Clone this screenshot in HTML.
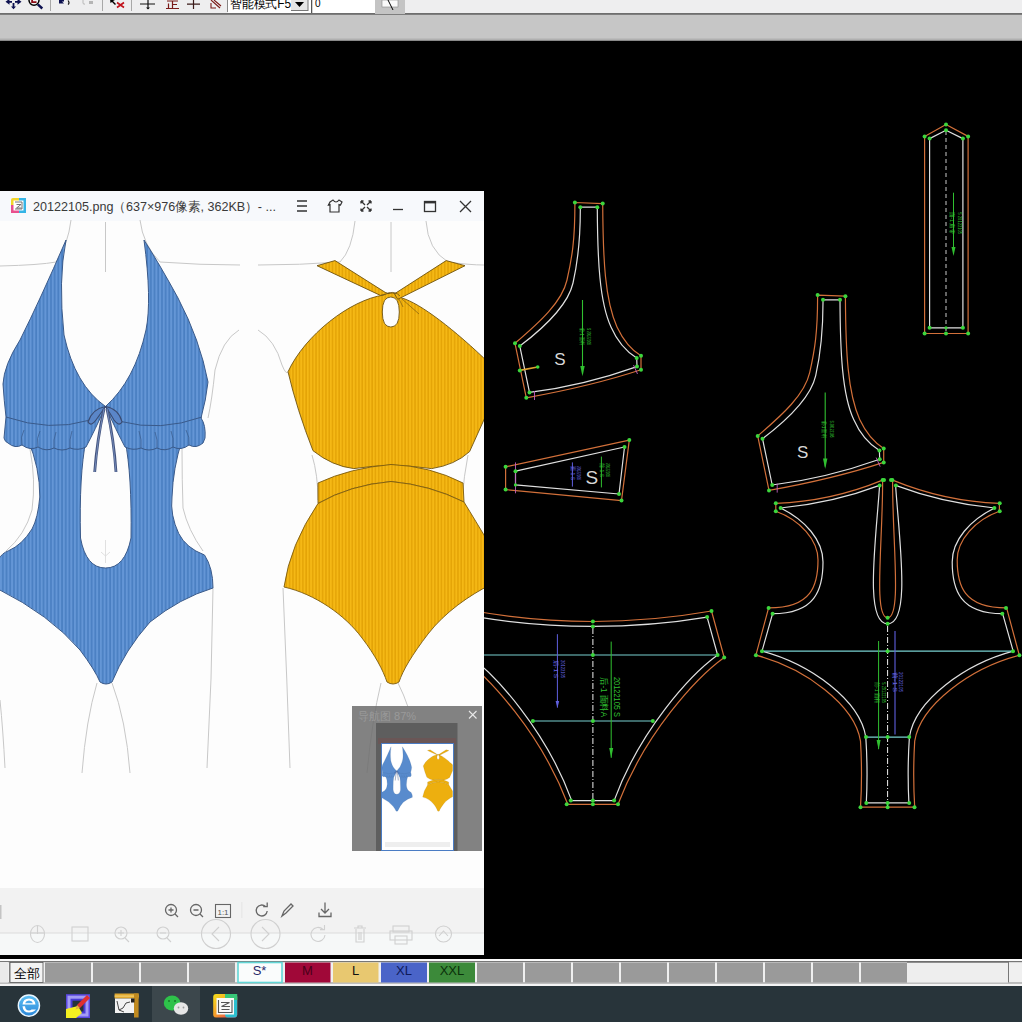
<!DOCTYPE html>
<html><head><meta charset="utf-8">
<style>
html,body{margin:0;padding:0;width:1022px;height:1022px;overflow:hidden;background:#000;font-family:"Liberation Sans",sans-serif;}
svg{position:absolute;left:0;top:0;display:block}
</style></head>
<body>
<svg width="1022" height="1022" viewBox="0 0 1022 1022" font-family="Liberation Sans, sans-serif">
<defs>
<pattern id="blueRib" patternUnits="userSpaceOnUse" width="3.7" height="10">
<rect width="3.7" height="10" fill="#6496d6"/><rect x="2" width="1.7" height="10" fill="#4a7fc2"/>
</pattern>
<pattern id="yelRib" patternUnits="userSpaceOnUse" width="3.3" height="10">
<rect width="3.3" height="10" fill="#f5b815"/><rect x="1.8" width="1.5" height="10" fill="#e4a406"/>
</pattern>
<linearGradient id="tbgrad" x1="0" y1="0" x2="0" y2="1">
<stop offset="0" stop-color="#f6f6f6"/><stop offset="1" stop-color="#ececec"/>
</linearGradient>
</defs>

<!-- ============ TOP TOOLBAR ============ -->
<g id="toolbar">
<rect x="0" y="0" width="1022" height="14" fill="#eeeeef"/>
<rect x="0" y="13" width="1022" height="1.5" fill="#6e6e6e"/>
<rect x="0" y="14.5" width="1022" height="26" fill="#c6c6c6"/>
<rect x="0" y="38.5" width="1022" height="2" fill="#b0b0b0"/>
<!-- move icon -->
<path d="M8.5 1.8H12M15 1.8H19M13.5 3V7.5" stroke="#0c1050" stroke-width="1.8" fill="none"/>
<path d="M5.5 1.8L9.5 -1.2V4.8Z M21.5 1.8L17.5 -1.2V4.8Z M11 6.5H16L13.5 9.3Z" fill="#0c1050"/>
<!-- magnifier -->
<circle cx="34" cy="0.3" r="5" fill="#f4f4f4" stroke="#000" stroke-width="1.5"/>
<path d="M31.2 -2H33V1.2H36.5V3H31.2Z" fill="#8a0a14"/>
<path d="M37.8 4.3L42.3 8.5" stroke="#0c1050" stroke-width="2.4"/>
<rect x="50" y="0" width="1" height="11" fill="#a8a8a8"/>
<!-- undo -->
<path d="M59 0H64V1.5H62L64 3.5H59Z" fill="#0c1050"/>
<path d="M68 0.5Q70 3 68 4.5" fill="none" stroke="#111" stroke-width="1.2"/>
<!-- redo gray -->
<path d="M83 0V3.5Q84 4.5 85 4" fill="none" stroke="#b8b8b8" stroke-width="1"/>
<path d="M89 1H93V4H89Z" fill="#b5b5b5"/>
<rect x="102" y="0" width="1" height="11" fill="#a8a8a8"/>
<!-- cursor + red x -->
<path d="M110 -1L110.5 3L112 2L115 5L116 4L113 1L115 0Z" fill="#000"/>
<path d="M117 2.5L124 7.5M117 7.5L124 2.5" stroke="#c0101a" stroke-width="1.6"/>
<rect x="131" y="0" width="1" height="11" fill="#a8a8a8"/>
<!-- move cross -->
<path d="M140 4H155M148 -1V9" stroke="#111" stroke-width="1.2" fill="none"/>
<path d="M146 7.5H150L148 9.5Z" fill="#111"/>
<!-- 正 -->
<path d="M167 1H178M172.5 1V8.5M172.5 4.5H177M168.5 3.5V8.5M166 8.5H179" stroke="#7a1a18" stroke-width="1.2" fill="none"/>
<!-- 十 -->
<path d="M187 4.2H200M193.5 0V9" stroke="#3a1a18" stroke-width="1.2" fill="none"/>
<!-- ruler -->
<path d="M211 0L220 8M214 0L221 6M211 3V8H216" stroke="#7a1a18" stroke-width="1.1" fill="none"/>
<rect x="227" y="0" width="1" height="12" fill="#888"/>
<!-- combobox -->
<rect x="228" y="0" width="83" height="13" fill="#fff"/>
<text x="230" y="7.8" font-size="13" fill="#000" textLength="61" lengthAdjust="spacingAndGlyphs">智能模式F5</text>
<rect x="291" y="0" width="17" height="10.5" fill="#e6e6e6"/>
<rect x="291" y="10" width="17" height="1" fill="#777"/>
<rect x="307.5" y="0" width="1" height="11" fill="#777"/>
<path d="M295 2H304L299.5 7Z" fill="#000"/>
<!-- input -->
<rect x="311" y="0" width="1.5" height="13" fill="#555"/>
<rect x="312.5" y="0" width="63" height="13" fill="#fff"/>
<text x="315" y="7" font-size="10" fill="#000">0</text>
<rect x="375" y="0" width="30" height="14" fill="#c4c4c4"/>
<rect x="382" y="0" width="16" height="7" fill="#fafafa" stroke="#888" stroke-width="0.6"/>
<path d="M388 0L393 10" stroke="#000" stroke-width="1"/>
</g>

<!-- ============ SIZE BAR ============ -->
<g id="sizebar">
<rect x="0" y="957" width="1022" height="29" fill="#f0f0f0"/>
<rect x="0" y="957" width="1022" height="2" fill="#000"/>
<rect x="0" y="959" width="1022" height="2" fill="#fafafa"/>
<rect x="0" y="961" width="1022" height="1.2" fill="#777"/>
<rect x="0" y="982.5" width="1022" height="1.2" fill="#888"/>
<rect x="0" y="983.7" width="1022" height="2.3" fill="#f4f4f4"/>
<rect x="0" y="962" width="8" height="20.5" fill="#eaeaea"/>
<rect x="9" y="962" width="1" height="20.5" fill="#999"/>
<rect x="10" y="962.5" width="33" height="20" fill="#f3f3f3" stroke="#555" stroke-width="0.8"/>
<text x="14" y="977.5" font-size="13" fill="#000">全部</text>
<g fill="#9a9a9a">
<rect x="45" y="962.5" width="46" height="20"/><rect x="93" y="962.5" width="46" height="20"/>
<rect x="141" y="962.5" width="46" height="20"/><rect x="189" y="962.5" width="46" height="20"/>
<rect x="477" y="962.5" width="46" height="20"/><rect x="525" y="962.5" width="46" height="20"/>
<rect x="573" y="962.5" width="46" height="20"/><rect x="621" y="962.5" width="46" height="20"/>
<rect x="669" y="962.5" width="46" height="20"/><rect x="717" y="962.5" width="46" height="20"/>
<rect x="765" y="962.5" width="46" height="20"/><rect x="813" y="962.5" width="46" height="20"/>
<rect x="861" y="962.5" width="46" height="20"/>
</g>
<rect x="238" y="962.5" width="44" height="20" fill="#fafcfc" stroke="#62d6d6" stroke-width="1.6"/>
<text x="259.5" y="974.5" font-size="13" fill="#2a2a6a" text-anchor="middle">S*</text>
<rect x="285" y="962.5" width="45.5" height="20" fill="#a00838"/>
<text x="307.5" y="974.5" font-size="13" fill="#4a0018" text-anchor="middle">M</text>
<rect x="333" y="962.5" width="45.5" height="20" fill="#e8c870"/>
<text x="355.5" y="974.5" font-size="13" fill="#111" text-anchor="middle">L</text>
<rect x="381" y="962.5" width="46" height="20" fill="#4a64c8"/>
<text x="404" y="974.5" font-size="13" fill="#0e1a5a" text-anchor="middle">XL</text>
<rect x="429" y="962.5" width="46" height="20" fill="#3c8a3a"/>
<text x="452" y="974.5" font-size="13" fill="#0a300a" text-anchor="middle">XXL</text>
<rect x="907" y="962" width="102" height="20.5" fill="#eeeeee"/>
<rect x="907" y="961.5" width="102" height="1.2" fill="#666"/>
<rect x="1008" y="962" width="1" height="20.5" fill="#777"/>
</g>

<!-- ============ TASKBAR ============ -->
<g id="taskbar">
<rect x="0" y="986" width="1022" height="36" fill="#28343a"/>
<rect x="152" y="986" width="48" height="36" fill="#3c474c"/>
<!-- IE -->
<defs><linearGradient id="ieg" x1="0" y1="0" x2="0" y2="1"><stop offset="0" stop-color="#5ec0f4"/><stop offset="1" stop-color="#2a86d8"/></linearGradient>
<linearGradient id="ivg" x1="0" y1="0" x2="1" y2="1"><stop offset="0" stop-color="#f6e21a"/><stop offset="0.5" stop-color="#f49a2a"/><stop offset="1" stop-color="#e8286a"/></linearGradient></defs>
<circle cx="28.9" cy="1005.6" r="10.6" fill="url(#ieg)" stroke="#eaf6ff" stroke-width="1.4"/>
<path d="M22.5 1004.5H35.5Q35 998.5 29 998.5Q23 998.5 22.5 1004.5Z" fill="#fff"/>
<path d="M25 1003.2H33Q32 1000.6 29 1000.6Q26 1000.6 25 1003.2Z" fill="#4aa8ec"/>
<path d="M22.5 1006.2Q23 1012.5 29 1012.5Q33.5 1012.5 36 1009.5H31.5Q30.5 1010.5 29 1010.5Q25.5 1010.5 25 1006.2Z" fill="#fff"/>
<!-- paint icon -->
<rect x="66" y="994.2" width="24" height="23.8" fill="#5a48e0"/>
<rect x="67.5" y="995.7" width="21" height="20.8" fill="#a49cf4"/>
<rect x="70.5" y="998.7" width="15" height="14.8" fill="#4a3cd8"/>
<rect x="72.5" y="1000.7" width="11" height="10.8" fill="#27343a"/>
<path d="M66 1009L78 1006L82 1013L76 1018H66Z" fill="#f4f020"/>
<path d="M77 1005L87 995L90 998L80 1008Z" fill="#e03030"/>
<path d="M77 1005L80 1008L75.5 1009.5Z" fill="#e8b040"/>
<!-- 3rd -->
<rect x="114.6" y="993.5" width="24" height="5" fill="#e0a830"/>
<rect x="114.6" y="995.5" width="24" height="1.2" fill="#f4d070"/>
<rect x="115" y="998.5" width="19.5" height="14.5" fill="#f2f2f2"/>
<rect x="134" y="993.5" width="4.6" height="24" fill="#c08a20"/>
<rect x="131" y="998.5" width="3.5" height="4" fill="#222"/>
<path d="M117 1001L119 1010L123 1008L126 1003L130 1002M119 1010L124 1012" stroke="#333" stroke-width="0.9" fill="none"/>
<!-- wechat -->
<ellipse cx="172.1" cy="1003" rx="8.3" ry="7.4" fill="#2ec24a"/>
<circle cx="169" cy="1001" r="1" fill="#1a7a2a"/><circle cx="175" cy="1001" r="1" fill="#1a7a2a"/>
<ellipse cx="181" cy="1008.5" rx="7.2" ry="6.2" fill="#e6e6e6"/>
<circle cx="178.5" cy="1007.5" r="0.9" fill="#9a9a9a"/><circle cx="183.5" cy="1007.5" r="0.9" fill="#9a9a9a"/>
<!-- image viewer -->
<rect x="213.2" y="994" width="24" height="23.5" rx="3" fill="url(#ivg)"/>
<rect x="225" y="994" width="12.2" height="23.5" rx="3" fill="#2ec0d0"/>
<rect x="225" y="994" width="12.2" height="6" fill="#38c878"/>
<rect x="216.5" y="998" width="17.5" height="16.5" fill="#fafafa"/>
<path d="M218.5 1000V1012.5H232V1000M221 1002.5H229.5L221.5 1006.5H230M221.5 1009.5H229.5" stroke="#555" stroke-width="1.1" fill="none"/>
</g>

<!-- CAD_START -->
<g id="cad" fill="none" stroke-linejoin="round">
<defs>
<g id="bust">
<path d="M574.9 202.5L602.7 203.6C603 260 605 300 617 327C625 344 633 351 641 355.8L641 369.8C610 380 570 390 526.3 397.8L515 343.3C540 322 562 302 567 280S575 240 574.9 202.5Z" stroke="#d2703a" stroke-width="1.2"/>
<path d="M580.3 207.2L597.3 207.2C597.5 260 599.5 302 611 327C618 343 627 352 636.7 358L637 366.6C605 378 565 388 529.5 392.4L519.8 346.1C545 327 568 305 573 283S580.5 240 580.3 207.2Z" stroke="#e0e0e0" stroke-width="1.2"/>
<g fill="#3cd63c" stroke="none">
<circle cx="574.9" cy="202.5" r="2"/><circle cx="602.7" cy="203.6" r="2"/><circle cx="641" cy="355.8" r="2"/><circle cx="641" cy="369.8" r="2"/>
<circle cx="526.3" cy="397.8" r="2"/><circle cx="515" cy="343.3" r="2"/>
<circle cx="580.3" cy="207.2" r="2"/><circle cx="597.3" cy="207.2" r="2"/><circle cx="636.7" cy="358" r="2"/><circle cx="637" cy="366.6" r="2"/>
<circle cx="529.5" cy="392.4" r="2"/><circle cx="519.8" cy="346.1" r="2"/>
</g>
<path d="M534.5 391V400M633.5 365L637.5 374" stroke="#c060c0" stroke-width="0.9"/>
<text x="560" y="365" font-size="17" fill="#d8d8d8" stroke="none" text-anchor="middle">S</text>
<path d="M582.5 300V374" stroke="#30c030" stroke-width="1.1"/>
<path d="M580.3 366L582.5 376.3L584.7 366Z" fill="#30c030" stroke="none"/>
<text transform="translate(579.7 328.0) rotate(90)" font-size="6" fill="#30c030" stroke="none" textLength="17.0" lengthAdjust="spacingAndGlyphs">前-1 面料</text><text transform="translate(587.2 328.0) rotate(90)" font-size="6" fill="#30c030" stroke="none" textLength="17.0" lengthAdjust="spacingAndGlyphs">S 20122105</text>
</g>
</defs>
<use href="#bust"/>
<use href="#bust" transform="translate(242.7 92.6)"/>
<!-- notch on piece1 -->
<path d="M519.8 370.4L537.7 367" stroke="#e0a030" stroke-width="1.6"/>
<circle cx="519.8" cy="370.4" r="2" fill="#3cd63c"/><circle cx="537.7" cy="367" r="1.8" fill="#3cd63c"/>

<!-- piece 2 small band -->
<path d="M505.6 466.8L629.3 440.1L621.5 500.6L505.6 489.6Z" stroke="#d2703a" stroke-width="1.2"/>
<path d="M515.5 471.2L624.5 447L619 494L515.5 484.9Z" stroke="#e0e0e0" stroke-width="1.2"/>
<path d="M515.5 462.4V493.3" stroke="#c060c0" stroke-width="0.9"/>
<path d="M572.4 462.4V486.6" stroke="#6060e0" stroke-width="1"/>
<path d="M601.4 456.6V487.4" stroke="#30c030" stroke-width="1"/>
<g fill="#3cd63c" stroke="none">
<circle cx="505.6" cy="466.8" r="2"/><circle cx="629.3" cy="440.1" r="2"/><circle cx="621.5" cy="500.6" r="2"/><circle cx="505.6" cy="489.6" r="2"/>
<circle cx="515.5" cy="471.2" r="2"/><circle cx="624.5" cy="447" r="2"/><circle cx="619" cy="494" r="2"/><circle cx="515.5" cy="484.9" r="1.6"/>
</g>
<text transform="translate(571.0 466.0) rotate(90)" font-size="6" fill="#6868e8" stroke="none" textLength="14.0" lengthAdjust="spacingAndGlyphs">面-1 S</text><text transform="translate(576.7 466.0) rotate(90)" font-size="6" fill="#6868e8" stroke="none" textLength="14.0" lengthAdjust="spacingAndGlyphs">20122105</text>
<text transform="translate(599.7 463.0) rotate(90)" font-size="6" fill="#30c030" stroke="none" textLength="14.0" lengthAdjust="spacingAndGlyphs">前-1 S</text><text transform="translate(605.7 463.0) rotate(90)" font-size="6" fill="#30c030" stroke="none" textLength="14.0" lengthAdjust="spacingAndGlyphs">20122105</text>
<text x="591.9" y="484" font-size="19" fill="#d8d8d8" stroke="none" text-anchor="middle">S</text>

<!-- piece 3 strap -->
<path d="M946 124.5L968.1 136.4V333.5H924.6V136.4Z" stroke="#d2703a" stroke-width="1.2"/>
<path d="M946 130.3L962.9 138.6V327.8H929.6V138.6Z" stroke="#e0e0e0" stroke-width="1.2"/>
<path d="M946 131V333" stroke="#c8c8c8" stroke-width="1" stroke-dasharray="4 3"/>
<path d="M953.5 192.7V254" stroke="#30c030" stroke-width="1"/>
<path d="M951.5 247L953.5 256L955.5 247Z" fill="#30c030" stroke="none"/>
<text transform="translate(949.7 212.0) rotate(90)" font-size="6" fill="#30c030" stroke="none" textLength="22.0" lengthAdjust="spacingAndGlyphs">面-1 肩带</text><text transform="translate(957.7 212.0) rotate(90)" font-size="6" fill="#30c030" stroke="none" textLength="22.0" lengthAdjust="spacingAndGlyphs">S 20122105</text>
<g fill="#3cd63c" stroke="none">
<circle cx="946" cy="124.5" r="2"/><circle cx="968.1" cy="136.4" r="2"/><circle cx="924.6" cy="136.4" r="2"/><circle cx="924.6" cy="333.5" r="2"/><circle cx="968.1" cy="333.5" r="2"/><circle cx="946" cy="333.5" r="2"/>
<circle cx="946" cy="130.3" r="2"/><circle cx="962.9" cy="138.6" r="2"/><circle cx="929.6" cy="138.6" r="2"/><circle cx="929.6" cy="327.8" r="2"/><circle cx="962.9" cy="327.8" r="2"/><circle cx="946" cy="327.8" r="1.6"/>
</g>

<!-- piece 5 front body -->
<path d="M887.6 807.2L860.5 807.2Q862.5 775.0 860.5 741.1C855.0 705.0 805.0 668.0 755.9 655.2L768.6 607.9C812.0 608.0 818.0 585.0 818.0 560.0C818.0 540.0 800.0 520.0 775.8 511.3L775.8 503.3Q830.4 501.5 882.6 480.1C883.0 540.0 873.0 617.7 887.6 617.7C902.2 617.7 892.2 540.0 892.6 480.1Q944.8 501.5 999.4 503.3L999.4 511.3C975.2 520.0 957.2 540.0 957.2 560.0C957.2 585.0 963.2 608.0 1006.6 607.9L1019.3 655.2C970.2 668.0 920.2 705.0 914.7 741.1Q912.7 775.0 914.7 807.2L887.6 807.2Z" stroke="#d2703a" stroke-width="1.2"/>
<path d="M887.6 802.9L866.3 802.9Q868.0 770.0 865.8 737.1C860.0 700.0 810.0 664.0 762.0 651.2L772.6 613.7C815.0 613.7 823.0 590.0 823.0 562.0C823.0 540.0 805.0 520.0 780.6 508.0Q833.0 503.0 879.6 485.4C876.0 540.0 864.0 623.8 887.6 623.8C911.2 623.8 899.2 540.0 895.6 485.4Q942.2 503.0 994.6 508.0C970.2 520.0 952.2 540.0 952.2 562.0C952.2 590.0 960.2 613.7 1002.6 613.7L1013.2 651.2C965.2 664.0 915.2 700.0 909.4 737.1Q907.2 770.0 908.9 802.9L887.6 802.9Z" stroke="#e0e0e0" stroke-width="1.2"/>
<path d="M762 651.2H1013M866 737.1H909.2" stroke="#78d0d0" stroke-width="1.2"/>
<path d="M887.6 626V807" stroke="#f0f0f0" stroke-width="1" stroke-dasharray="6 2 1 2"/>
<path d="M878.6 641V749" stroke="#30c030" stroke-width="1"/>
<path d="M876.6 740L878.6 750L880.6 740Z" fill="#30c030" stroke="none"/>
<path d="M895 631V734.5" stroke="#6060e0" stroke-width="1.1"/>
<text transform="translate(875.2 682.0) rotate(90)" font-size="6" fill="#30c030" stroke="none" textLength="21.0" lengthAdjust="spacingAndGlyphs">前-1 面料</text><text transform="translate(881.7 682.0) rotate(90)" font-size="6" fill="#30c030" stroke="none" textLength="21.0" lengthAdjust="spacingAndGlyphs">S 20122105</text>
<text transform="translate(892.7 672.0) rotate(90)" font-size="6" fill="#6868e8" stroke="none" textLength="20.0" lengthAdjust="spacingAndGlyphs">前-1 S</text><text transform="translate(898.7 672.0) rotate(90)" font-size="6" fill="#6868e8" stroke="none" textLength="20.0" lengthAdjust="spacingAndGlyphs">20122105</text>
<g fill="#3cd63c" stroke="none">
<circle cx="775.8" cy="503.3" r="2"/><circle cx="775.8" cy="511.3" r="2"/><circle cx="882.6" cy="480.1" r="2"/><circle cx="892.4" cy="480.1" r="2"/><circle cx="884" cy="480.1" r="2"/><circle cx="891" cy="480.1" r="2"/>
<circle cx="999.7" cy="503.3" r="2"/><circle cx="999.7" cy="511.3" r="2"/><circle cx="1006" cy="607.9" r="2"/><circle cx="1019.4" cy="655.2" r="2"/>
<circle cx="914.5" cy="807.2" r="2"/><circle cx="860.5" cy="807.2" r="2"/><circle cx="887.6" cy="807.2" r="2"/><circle cx="755.9" cy="655.2" r="2"/><circle cx="768.6" cy="607.9" r="2"/>
<circle cx="780.6" cy="508" r="2"/><circle cx="879.6" cy="485.4" r="2"/><circle cx="895.9" cy="485.4" r="2"/><circle cx="994.4" cy="508" r="2"/>
<circle cx="1002.3" cy="613.7" r="2"/><circle cx="1013" cy="651.2" r="2"/><circle cx="909.2" cy="802.9" r="2"/><circle cx="866.3" cy="802.9" r="2"/><circle cx="887.6" cy="802.9" r="2"/>
<circle cx="762" cy="651.2" r="2"/><circle cx="772.6" cy="613.7" r="2"/><circle cx="887.6" cy="617.7" r="2"/><circle cx="887.6" cy="623.8" r="2"/><circle cx="887.6" cy="651.2" r="2"/>
<circle cx="866" cy="737.1" r="2"/><circle cx="909.2" cy="737.1" r="2"/><circle cx="887.6" cy="737.1" r="2"/>
</g>

<!-- piece 6 back bottom -->
<path d="M592.9 804.3L567.8 804.3C540.8 733.0 488.8 677.0 461.6 657.5L474.3 611.0C520.0 619.0 560.0 621.5 592.9 621.5C625.8 621.5 665.8 619.0 711.5 611.0L724.2 657.5C697.0 677.0 645.0 733.0 618.0 804.3L592.9 804.3Z" stroke="#d2703a" stroke-width="1.2"/>
<path d="M592.9 800.6L571.7 800.6C545.8 730.0 495.8 675.0 468.2 655.0L478.7 617.1C520.0 624.0 560.0 626.4 592.9 626.4C625.8 626.4 665.8 624.0 707.1 617.1L717.6 655.0C690.0 675.0 640.0 730.0 614.1 800.6L592.9 800.6Z" stroke="#e0e0e0" stroke-width="1.2"/>
<path d="M468 655H717.6M532.9 721H652.8" stroke="#78d0d0" stroke-width="1.2"/>
<path d="M592.9 628V804" stroke="#f0f0f0" stroke-width="1" stroke-dasharray="6 2 1 2"/>
<path d="M557.4 634.2V707.6" stroke="#6060e0" stroke-width="1"/>
<path d="M555.6 701L557.4 708L559.2 701Z" fill="#6060e0" stroke="none"/>
<path d="M611.2 641.6V757.8" stroke="#30c030" stroke-width="1"/>
<path d="M609.2 748L611.2 758L613.2 748Z" fill="#30c030" stroke="none"/>
<text transform="translate(613.8 677) rotate(90)" font-size="8.5" fill="#30c030" stroke="none" textLength="40" lengthAdjust="spacingAndGlyphs">20122105  S</text>
<text transform="translate(600.5 677) rotate(90)" font-size="8.5" fill="#30c030" stroke="none" textLength="40" lengthAdjust="spacingAndGlyphs">后-1  面料A</text>
<text transform="translate(554.2 660.0) rotate(90)" font-size="6" fill="#6868e8" stroke="none" textLength="18.0" lengthAdjust="spacingAndGlyphs">后-1 S</text><text transform="translate(561.2 660.0) rotate(90)" font-size="6" fill="#6868e8" stroke="none" textLength="18.0" lengthAdjust="spacingAndGlyphs">20122105</text>
<g fill="#3cd63c" stroke="none">
<circle cx="711.5" cy="611" r="2"/><circle cx="724.2" cy="657.5" r="2"/><circle cx="618" cy="804.3" r="2"/><circle cx="566.7" cy="804.3" r="2"/><circle cx="592.9" cy="804.3" r="2"/>
<circle cx="707.1" cy="617.1" r="2"/><circle cx="717.6" cy="655" r="2"/><circle cx="614.1" cy="800.6" r="2"/><circle cx="570.8" cy="800.6" r="2"/><circle cx="592.9" cy="800.6" r="2"/>
<circle cx="592.9" cy="621.5" r="2"/><circle cx="592.9" cy="626.4" r="2"/><circle cx="592.9" cy="655" r="2"/><circle cx="592.9" cy="721" r="2"/>
<circle cx="532.9" cy="721" r="2"/><circle cx="652.8" cy="721" r="2"/>
</g>
</g>

<!-- CAD_END -->
<!-- VIEWER_START -->
<g id="viewer">
<clipPath id="vclip"><rect x="0" y="191" width="484" height="764"/></clipPath>
<g clip-path="url(#vclip)">
<rect x="0" y="191" width="484" height="764" fill="#fdfdfd"/>
<!-- title bar -->
<rect x="0" y="191" width="484" height="30" fill="#f7f9fc"/>
<!-- body outlines (light gray) -->
<g fill="none" stroke="#c8c8c8" stroke-width="1">
<!-- blue figure neck/shoulders -->
<path d="M71 220Q68 245 56 262Q40 265 0 266"/>
<path d="M140 220Q143 245 160 262Q200 265 240 265"/>
<path d="M105.5 222V272"/>
<path d="M239 330Q222 340 215 370Q212 400 208 418"/>
<path d="M30 449Q36 480 32 510Q25 535 6 551"/>
<path d="M182 449Q182 480 183 508Q188 530 203 551"/>
<!-- legs -->
<path d="M213 588Q212 680 207 768"/>
<path d="M97 683Q86 720 82 773"/>
<path d="M112 683Q126 720 130 773"/>
<path d="M0 700Q3 730 5 768"/>
<!-- yellow figure -->
<path d="M355 221Q352 250 340 262Q300 265 258 265"/>
<path d="M426 221Q428 250 448 262Q470 265 484 265"/>
<path d="M391 222V272"/>
<path d="M258 330Q275 340 282 365Q286 375 288 372"/>
<path d="M312 455Q318 475 318 500"/>
<path d="M468 455Q464 475 462 500"/>
<path d="M283 588Q287 680 290 768"/>
<path d="M381 683Q372 720 367 773"/>
<path d="M398 683Q404 695 408 707"/>
</g>
<g id="suits">
<!-- BLUE SWIMSUIT -->
<path d="M28 440 Q40 468 39.8 497 Q38 518 32 529 Q22 545 8.6 550.7 Q2 553 -2 560 L-2 589
 Q50 615 80 650 Q95 670 100 682 Q106 686 112 682 Q125 650 150 622 Q180 598 213 588
 Q213 568 204.5 555 Q186 548 178.7 533.5 Q170 515 172 497 Q173 468 182 440 L125 440
 Q132 475 131 538 Q125 568 105.5 568 Q86 568 80.5 538 Q79 475 86 440 Z"
 fill="url(#blueRib)" stroke="#3a5a8a" stroke-width="1"/>
<path d="M105.5 540V563M101 552L105.5 556L110 552" fill="none" stroke="#d8d8d8" stroke-width="0.8"/>
<path d="M66 240 Q40 300 20 340 Q4 365 3 384 Q4 400 6 417 L4 438 Q5 442 8 443
 Q15 449 22 445 Q30 451 38 447 Q46 452 54 448 Q62 452 70 448 Q78 451 86 447
 Q95 430 105.5 406.5 Q116 430 125 447
 Q133 451 141 448 Q149 452 157 448 Q165 452 173 447 Q181 451 189 445 Q196 449 203 443
 L205 438 Q206 425 201 418 Q206 400 208 382 Q200 340 178 298 Q160 265 144 240
 Q152 300 146 330 Q135 380 105.5 406.5 Q75 385 64 335 Q58 280 66 240 Z"
 fill="url(#blueRib)" stroke="#3a5a8a" stroke-width="1"/>
<path d="M6 417 Q50 432 88 420.5 Q98 416 105.5 406.5 Q113 416 121 421.5 Q160 432 202 417" fill="none" stroke="#3a5a8a" stroke-width="1"/>
<path d="M22 445 Q20 437 24 430 M38 447 Q36 438 40 431 M54 448 Q53 440 56 432 M70 448 Q69 440 72 431 M141 448 Q142 440 139 431 M157 448 Q158 440 155 432 M173 447 Q174 438 171 431 M189 445 Q190 437 186 430" fill="none" stroke="#3a5a8a" stroke-width="0.7"/>
<path d="M105.5 406.5 Q92 409 88 422 Q91 427 96 420 Q101 413 105.5 406.5 Z M105.5 406.5 Q119 409 122 422 Q119 427 114 420 Q110 413 105.5 406.5 Z" fill="#5a86c8" stroke="#3a4a70" stroke-width="1.1"/>
<path d="M104 409 Q97 440 94.7 472 M107 409 Q114 440 116 472" fill="none" stroke="#44547e" stroke-width="2.8"/>
<path d="M104 409 Q97 440 94.7 472 M107 409 Q114 440 116 472" fill="none" stroke="#7890c0" stroke-width="0.9"/>
<!-- YELLOW SWIMSUIT top -->
<path d="M383.8 295 C350 300 305 335 288 371.8 Q297 410 313 450.7 Q332 466 353.8 468.6 Q372 466 391.8 465 Q412 466 431.7 468.6 Q455 465 469.6 451.6 L484 419.7 L490 405 L490 364 C455 330 420 303 401.8 298 Q395 292 389.8 293 Q386 293 383.8 295 Z M390.8 297 Q382.3 297 382.3 312 Q382.3 327 390.8 327 Q399.3 327 399.3 312 Q399.3 297 390.8 297 Z" fill="url(#yelRib)" fill-rule="evenodd" stroke="#6e5210" stroke-width="0.9"/>
<path d="M399 299 L403 307 M402 299 L419 314" fill="none" stroke="#6e5210" stroke-width="0.6"/>
<path d="M317 265.7 L335 260.6 L385.1 292.3 Q388 294 389.8 293 L380.4 295.4 Z" fill="url(#yelRib)" stroke="#6e5210" stroke-width="0.9"/>
<path d="M465 265.7 L446.2 260.6 L394.5 293.8 L397.7 299.3 Z" fill="url(#yelRib)" stroke="#6e5210" stroke-width="0.9"/>
<path d="M389.8 293 Q395 291 400 296" fill="none" stroke="#6e5210" stroke-width="0.8"/>
<!-- band -->
<path d="M318 483 Q350 468 391 464.5 Q430 466 463 483 L464 502 Q430 485 391 481.5 Q350 485 318 503.5 Z" fill="url(#yelRib)" stroke="#7a5a10" stroke-width="0.9"/>
<!-- bottom -->
<path d="M318 503.5 Q350 485 391 481.5 Q430 485 464 502 Q475 520 490 545 L490 585 C470 595 445 612 428 634 C412 655 403 670 399 682 Q393 686 387 682 C383 670 375 655 362 638 C345 615 315 594 284 587 Q290 545 318 503.5 Z" fill="url(#yelRib)" stroke="#7a5a10" stroke-width="0.9"/>
</g>
<!-- thumbnail -->
<rect x="352" y="706" width="130" height="145" fill="#6e6e6e" fill-opacity="0.86"/>
<text x="358" y="720" font-size="11" fill="#9a9a9a">导航图 87%</text>
<path d="M469 711L476.5 718.5M476.5 711L469 718.5" stroke="#e8e8e8" stroke-width="1.1"/>
<rect x="376" y="723" width="81.5" height="128" fill="#5e5e5e"/>
<rect x="378" y="738" width="78" height="6" fill="#6a5656"/>
<clipPath id="thclip"><rect x="382" y="744" width="71" height="106"/></clipPath>
<rect x="381" y="743" width="73" height="108" fill="#4a7cc4"/>
<rect x="382" y="744" width="71" height="106" fill="#ffffff"/>
<g clip-path="url(#thclip)"><use href="#suits" transform="translate(381.5 712) scale(0.145)"/></g>
<rect x="385" y="842" width="65" height="5" fill="#eeeeee"/>
<!-- bottom toolbar -->
<rect x="0" y="888" width="484" height="45" fill="#f2f2f2"/>
<rect x="0" y="933" width="484" height="22" fill="#f6f8f8"/>
<rect x="0" y="932.5" width="484" height="1" fill="#dcdcdc"/>
<rect x="0" y="905" width="1.5" height="14" fill="#c4c4c4"/>
<!-- row1 icons -->
<g fill="none" stroke="#666" stroke-width="1.3">
<circle cx="171" cy="910" r="5.5"/><path d="M175 914L178 917M168.5 910H173.5M171 907.5V912.5"/>
<circle cx="196" cy="910" r="5.5"/><path d="M200 914L203 917M193.5 910H198.5"/>
<rect x="215.5" y="904.5" width="15" height="13" stroke-width="1.1"/>
<path d="M267.2 911A5.5 5.5 0 1 1 265.5 906.5M263.2 906.6H267.2V902.6"/>
<path d="M282 916L284 911L291 904L293 906L286 913Z"/>
<path d="M325 902.5V913M321 909L325 913L329 909M319 912.5V916.5H331V912.5"/>
</g>
<text x="223" y="915" font-size="8" fill="#555" text-anchor="middle">1:1</text>
<rect x="241.5" y="902" width="0.8" height="16" fill="#e0e0e0"/>
<!-- row2 faint icons -->
<g fill="none" stroke="#d0d0d0" stroke-width="1.1">
<ellipse cx="37.5" cy="934" rx="7" ry="8.5"/><path d="M37.5 926V934M30.5 933H44.5"/>
<rect x="72" y="927" width="16" height="14"/>
<circle cx="121" cy="933" r="6"/><path d="M125 938L129 942M118 933H124M121 930V936"/>
<circle cx="163" cy="933" r="6"/><path d="M167 938L171 942M160 933H166"/>
<circle cx="216" cy="934" r="14.5"/><path d="M219 927L212 934L219 941"/>
<circle cx="265.5" cy="934" r="14.5"/><path d="M262 927L269 934L262 941"/>
<path d="M325 935A7 7 0 1 1 323 929.5M320 929.6H324.5V925"/>
<path d="M354 928H366M358 928V926H362V928M356 929V942H364V929M359 932V940M361 932V940"/>
<rect x="393" y="926" width="16" height="6"/><rect x="390" y="931" width="22" height="9"/><rect x="395" y="936" width="12" height="8"/>
<circle cx="443.5" cy="934" r="8"/><path d="M439 936L443.5 931L448 936"/>
</g>
<!-- title bar contents -->
<rect x="11" y="198" width="15" height="15" rx="2" fill="#f2d62a"/>
<rect x="11" y="205" width="15" height="8" fill="#e9508e"/>
<rect x="19" y="198" width="7" height="15" fill="#34b4e6"/>
<rect x="13.5" y="200.5" width="10" height="10" fill="#fff"/>
<path d="M15 202H22V209H15M16.5 204.5H21L16.5 208H21.5" stroke="#666" stroke-width="0.9" fill="none"/>
<text x="33" y="211" font-size="13" fill="#3a3a3a" textLength="243" lengthAdjust="spacingAndGlyphs">20122105.png（637×976像素, 362KB）- ...</text>
<g fill="none" stroke="#333" stroke-width="1.3">
<path d="M297 201H307M297 206H307M297 211H307"/>
<path d="M330 202L333 200Q334.5 202 336 202Q337.5 202 339 200L342 202L340.5 205L339 204.5V212H330V204.5L328.5 205Z" stroke-width="1.2"/>
<path d="M361 201L365 205M371 201L367 205M361 211L365 207M371 211L367 207M361 201H363.5M361 201V203.5M371 201H368.5M371 201V203.5M361 211H363.5M361 211V208.5M371 211H368.5M371 211V208.5"/>
<path d="M393 209.5H403"/>
<rect x="424.5" y="201.5" width="11" height="10"/><path d="M424.5 202.5H435.5" stroke-width="1.8"/>
<path d="M460 201L471 212M471 201L460 212"/>
</g>
</g>
</g>

<!-- VIEWER_END -->
</svg>
</body></html>
